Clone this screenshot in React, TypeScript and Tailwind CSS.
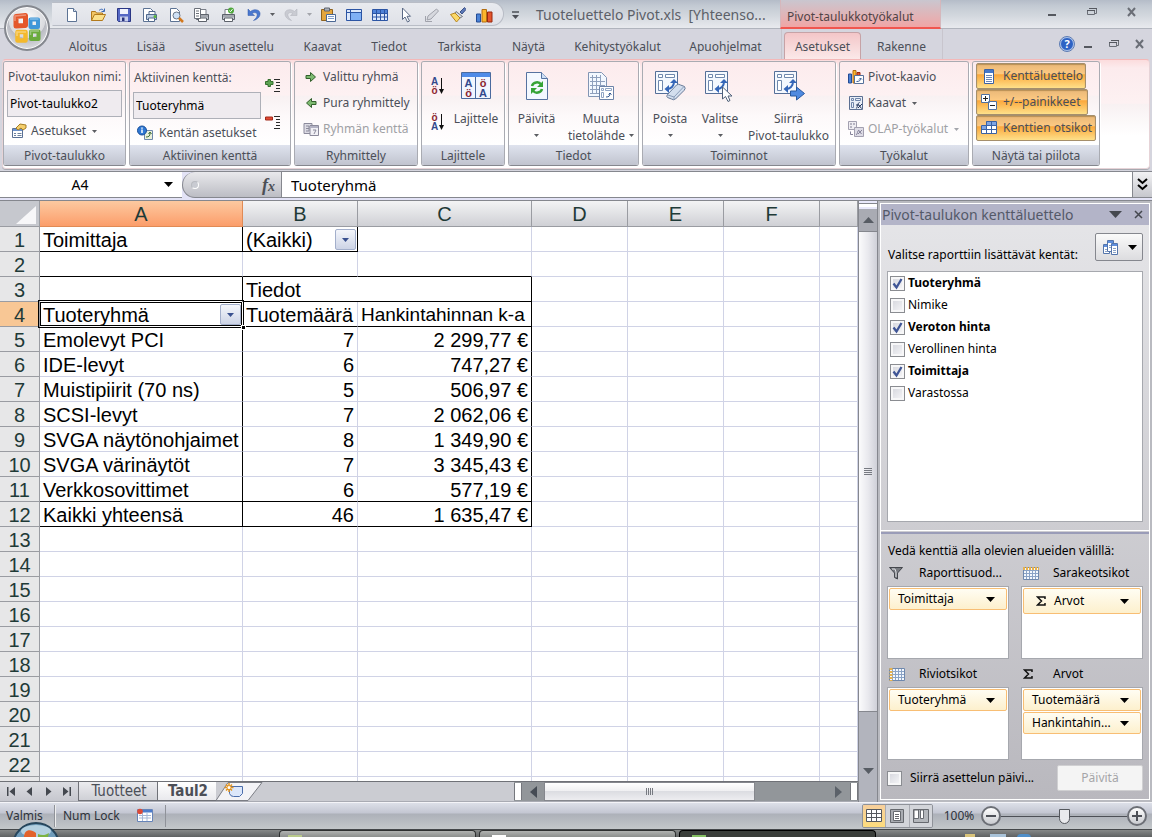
import React from 'react';

type Kids = { children?: React.ReactNode };

const Svg: React.FC<Kids & { w?: number; h?: number }> = ({ w = 16, h = 16, children }) => (
  <svg xmlns="http://www.w3.org/2000/svg" width={w} height={h} viewBox={`0 0 ${w} ${h}`} fill="none" className="shrink-0" aria-hidden="true">
    {children}
  </svg>
);

const Caret: React.FC<{ big?: boolean; faded?: boolean }> = ({ big, faded }) => (
  <Svg w={big ? 9 : 5} h={big ? 5 : 3}>
    <path d={big ? 'M0 0h9L4.500 5z' : 'M0 0h5L2.500 3z'} fill={big ? '#000' : faded ? '#a3a5ab' : '#5b5d62'} />
  </Svg>
);

/* ---------- small icons ---------- */

const sheet = <path d="M3.500 1.500h6l3 3v10h-9z" fill="#fff" stroke="#5c7394" />;
const fold = <path d="M9.500 1.500v3h3" stroke="#5c7394" fill="#dbe6f5" />;

const Printer: React.FC<Kids> = ({ children }) => (
  <Svg>
    <path d="M5 2.500h7v5H5z" fill="#fff" stroke="#7a7f88" />
    <path d="M2.500 7.500h12v5h-12z" fill="#c5c9d0" stroke="#5d626b" />
    <path d="M4.500 11h8v3.500h-8z" fill="#fff" stroke="#5d626b" />
    <path d="M3 9h11" stroke="#83878f" />
    {children}
  </Svg>
);

const TableIcon: React.FC<{ cols?: string }> = ({ cols }) => (
  <Svg>
    <path d="M.500 2.500h15v11H.500z" fill={cols ? '#dce8fb' : '#7fb0f5'} stroke="#2c55a4" />
    <path d={cols ? 'M1 3h14v3H1z' : 'M1 3h3v10H1zM4 3h11v2H4z'} fill={cols ? '#4f82d8' : '#dce8fb'} />
    <path d={cols ?? 'M4.500 3v10M1 5.500h14'} stroke="#2c55a4" />
  </Svg>
);

const QUICK: { name: string; icon: React.ReactNode }[] = [
  { name: 'Uusi', icon: <Svg>{sheet}{fold}</Svg> },
  {
    name: 'Avaa',
    icon: (
      <Svg>
        <path d="M1.500 13.500v-9h4l1 1.500h6v2" fill="#f2c665" stroke="#b27a1c" />
        <path d="m1.500 13.500 3-6h11l-3 6z" fill="#fbe08b" stroke="#b27a1c" />
        <path d="M9 3.500c2-2 4-1.500 5 .5m.5-2.500V4.500h-3" stroke="#3a69b5" />
      </Svg>
    ),
  },
  {
    name: 'Tallenna',
    icon: (
      <Svg>
        <path d="M1.500 1.500h13v13h-12l-1-1z" fill="#5568c4" stroke="#2a3684" />
        <path d="M4 2h8v5H4z" fill="#f1f4fd" />
        <path d="M4 9.500h8v5H4z" fill="#c9d0ec" />
        <path d="M6 10.500h2.500V14H6z" fill="#27327a" />
      </Svg>
    ),
  },
  {
    name: 'Pikatulostus',
    icon: (
      <Svg>
        <path d="M1.500 1.500h7l3 3v10h-10z" fill="#fff" stroke="#5c7394" />
        <path d="M4.500 7.500h10v5h-10z" fill="#b9cbe2" stroke="#51698c" />
        <path d="M7 4.500h6v3H7zM6.500 11h6v3.500h-6z" fill="#fff" stroke="#51698c" />
        <circle cx="13" cy="9.500" r="1.500" fill="#58b53a" />
      </Svg>
    ),
  },
  {
    name: 'Esikatselu',
    icon: (
      <Svg>
        <path d="M2.500 1.500h6l3 3v10h-9z" fill="#fff" stroke="#5c7394" />
        <circle cx="8.500" cy="8.500" r="3.500" fill="#cfe2f7" stroke="#6c7787" />
        <path d="m11 11 4 4" stroke="#d2781e" strokeWidth="2.500" />
      </Svg>
    ),
  },
  { name: 'Tulostusalue', icon: <Printer><path d="M.500 1.500h6v10h-6z" fill="#fff" stroke="#6b7079" /><path d="M2 4h3M2 6.500h3M2 9h3" stroke="#6b7079" /></Printer> },
  { name: 'Tulosta', icon: <Printer><circle cx="11" cy="3.500" r="3" fill="#4fa83c" /><path d="m9.500 3.500 1 1.200 2-2.500" stroke="#fff" /></Printer> },
];

const QUICK2: { name: string; icon: React.ReactNode }[] = [
  {
    name: 'Liitä',
    icon: (
      <Svg>
        <path d="M1.500 2.500h11v11h-11z" fill="#e5a63c" stroke="#8e6320" />
        <path d="M4.500 1h5v3h-5z" fill="#aab0ba" stroke="#5f656f" />
        <path d="M6.500 7.500h9v7h-9z" fill="#fff" stroke="#4a6794" />
        <path d="M8 9.500h6M8 11.500h6" stroke="#7d9cc9" />
      </Svg>
    ),
  },
  { name: 'Ruudut', icon: <TableIcon /> },
  { name: 'Taulukko', icon: <TableIcon cols="M4.500 3v10M8.500 3v10M12.500 3v10M1 6.500h14M1 10h14" /> },
  { name: 'Valitse objektit', icon: <Svg><path d="M4.500 1v11.500L7 10l2.500 5 2-1L9 9.300h3.500z" fill="#fff" stroke="#5c6b86" /></Svg> },
  { name: 'Piirrä', icon: <Svg><path d="m3 13 1-4 8.500-7 2 2L7 12z" fill="#d6d8de" stroke="#a0a2ab" /><path d="M1.500 9v5.500H8" stroke="#a0a2ab" /></Svg> },
  {
    name: 'Muotoilusivellin',
    icon: (
      <Svg>
        <path d="m14.500.500 1.500 2-4 4.500-2-2z" fill="#5c79b8" stroke="#3c5288" />
        <path d="m6 4.500 6.500 5-2.500 1.500L5 6z" fill="#d5d9e0" stroke="#74797f" />
        <path d="m5 6 5 5-3.500 4L.500 7.500z" fill="#fbd968" stroke="#b8861f" />
      </Svg>
    ),
  },
  {
    name: 'Kaavio',
    icon: (
      <Svg w={17}>
        <path d="M.500 7h4v8h-4z" fill="#4a82d6" stroke="#234b94" />
        <path d="M6 2.500h4.500V15H6z" fill="#fbb62c" stroke="#b26d10" />
        <path d="M11.500 5H16v10h-4.500z" fill="#e4552c" stroke="#99280e" />
      </Svg>
    ),
  },
];

const GridIcon: React.FC<{ left?: boolean }> = ({ left }) => (
  <Svg w={16} h={13}>
    <path d="M.500.500h15v12H.500z" fill="#f4f8fd" stroke="#6f88ad" />
    <path d="M3.500 1v11M6.500 1v11M9.500 1v11M12.500 1v11M1 3.500h14M1 6.500h14M1 9.500h14" stroke="#8ba3c6" />
    <path d={left ? 'M2 0v13' : 'M0 1.500h16'} stroke="#e8b24d" strokeWidth="3" strokeDasharray="2 1" />
  </Svg>
);

const Indent: React.FC<{ minus?: boolean }> = ({ minus }) => (
  <Svg w={16} h={15}>
    {minus ? (
      <path d="M.500 2h7v3h-7z" fill="#e34a35" stroke="#a02b1b" />
    ) : (
      <path d="M3 1.500h2.500v2H8v3H5.500v2H3v-2H.500v-3H3z" fill="#5da352" stroke="#35702f" />
    )}
    <path d="M9 1.500h6M11 4.500h4M11 7.500h4M11 10.500h4M9 13.500h6" stroke="#2a2a2a" />
  </Svg>
);

const SortIcon: React.FC<{ desc?: boolean }> = ({ desc }) => (
  <span className="flex w-4 items-center gap-px">
    <span className="flex flex-col text-center font-['Liberation_Sans'] text-[10px] leading-[9px] font-bold">
      <span className={desc ? 'text-[#8b2630]' : 'text-[#33498c]'}>{desc ? 'ö' : 'A'}</span>
      <span className={desc ? 'text-[#33498c]' : 'text-[#8b2630]'}>{desc ? 'A' : 'ö'}</span>
    </span>
    <Svg w={5} h={16}><path d="M2.500 0v13" stroke="#111" /><path d="M0 11h5l-2.500 5z" fill="#111" /></Svg>
  </span>
);

const Arrow: React.FC<{ back?: boolean }> = ({ back }) => (
  <Svg w={12} h={12}>
    <path d={back ? 'M11 4.500v3H6.500v3L1.500 6l5-4.500v3z' : 'M1 4.500v3h4.500v3l5-4.500-5-4.500v3z'} fill="#7dba70" stroke="#33602c" />
  </Svg>
);

/* pivot layout drawing shared by the big buttons of Toiminnot */
const PivotBig: React.FC<Kids> = ({ children }) => (
  <Svg w={32} h={32}>
    <path d="M1.500 1.500h22v22h-22z" fill="#f4f8fe" stroke="#546f98" />
    <path d="M4.500 4.500h4v3h-4zM11.500 4.500h9v3h-9zM4.500 10.500h4v10h-4z" fill="#fff" stroke="#6f88ad" />
    <path d="M13 19c4 0 7-3 7-7" stroke="#3566b8" strokeWidth="2" />
    <path d="m16 13 4-4 4 4zM15 15v8l-4.500-4z" fill="#3566b8" />
    {children}
  </Svg>
);

/* ---------- ribbon pieces ---------- */

const Group: React.FC<Kids & { title: string; width: string }> = ({ title, width, children }) => (
  <section className={`flex h-[105px] shrink-0 flex-col overflow-hidden rounded-[3px] border border-[#a9abb2] border-b-[#85878e] shadow-[1px_1px_0_#ffffff] ${width}`}>
    <div className="flex min-h-0 flex-1 bg-[linear-gradient(#fcebed_0,#fdf1f2_40%,#f8f1f2_41%,#fdf9fa_65%,#ffffff)]">{children}</div>
    <h2 className="h-5 shrink-0 bg-linear-to-b from-[#dfe3ee] to-[#c1c4cf] text-center leading-[22px]">{title}</h2>
  </section>
);

const RowButton: React.FC<{ icon: React.ReactNode; label: string; caret?: boolean; disabled?: boolean }> = ({ icon, label, caret, disabled }) => (
  <button disabled={disabled} className={`flex h-[26px] items-center gap-1 whitespace-nowrap ${disabled ? 'text-[#a0a1a5]' : ''}`}>
    <span className="flex w-4 justify-center">{icon}</span>
    {label}
    {caret && <span className="pl-0.5"><Caret faded={disabled} /></span>}
  </button>
);

const BigButton: React.FC<{ icon: React.ReactNode; lines: string[]; caret?: 'below' | 'beside'; width: string }> = ({ icon, lines, caret, width }) => (
  <button className={`flex flex-col items-center pt-2 leading-[17px] whitespace-nowrap ${width}`}>
    <span className="mb-2 flex h-8 items-center">{icon}</span>
    <span>{lines[0]}</span>
    {lines[1] && <span className="flex items-center gap-1">{lines[1]}{caret === 'beside' && <Caret />}</span>}
    {caret === 'below' && <span className="flex h-[17px] items-center"><Caret /></span>}
  </button>
);

const ToggleButton: React.FC<{ icon: React.ReactNode; label: string; width: string }> = ({ icon, label, width }) => (
  <button aria-pressed="true" className={`flex h-[26px] items-center gap-1.5 rounded-xs border border-[#a58f6c] bg-[linear-gradient(#eab878_0,#fcc982_40%,#fba83c_45%,#fee08a)] pl-1 whitespace-nowrap shadow-[inset_0_1px_1px_#b98f55] ${width}`}>
    <span className="flex w-4 shrink-0 justify-center">{icon}</span>
    {label}
  </button>
);

/* window buttons of the frame and of the workbook */
const WindowButtons: React.FC<{ gap: string }> = ({ gap }) => (
  <div className={`flex items-center ${gap}`}>
    <button aria-label="Pienennä"><Svg w={12} h={10}><path d="M2 8h8" stroke="#55585f" strokeWidth="2" /></Svg></button>
    <button aria-label="Palauta"><Svg w={12} h={10}><path d="M3.500 2V1.500h7v5H9" stroke="#6a6e76" /><path d="M1.500 3.500h7v4h-7z" stroke="#6a6e76" /><path d="M1 3.500h8M3 1.500h8" stroke="#55585f" /></Svg></button>
    <button aria-label="Sulje"><Svg w={12} h={10}><path d="m2 1 7 8M9 1 2 9" stroke="#6a6e76" strokeWidth="2" /></Svg></button>
  </div>
);

const TABS: [string, string][] = [
  ['Aloitus', 'w-[68px]'],
  ['Lisää', 'w-[58px]'],
  ['Sivun asettelu', 'w-[109px]'],
  ['Kaavat', 'w-[67px]'],
  ['Tiedot', 'w-[66px]'],
  ['Tarkista', 'w-[75px]'],
  ['Näytä', 'w-[63px]'],
  ['Kehitystyökalut', 'w-[115px]'],
  ['Apuohjelmat', 'w-[101px]'],
];

const TitleBar = () => (
  <header className="relative shrink-0 bg-[#d5d5de]">
    <div className="flex h-[29px] border-b border-[#b0b4bd] bg-[linear-gradient(#b4bcc8_0,#c3cad3_6px,#d3d8de_16px,#e8eaee)]">
      <div className="mt-0.5 mb-0.5 ml-[52px] flex items-center rounded-r-full border border-[#b9bdc6] border-l-transparent bg-linear-to-b from-[#e9ebef] to-[#dfe1e8] pt-px pr-2.5 pl-[11px]">
        <div className="flex gap-2.5">
          {QUICK.map((q) => <button key={q.name} aria-label={q.name}>{q.icon}</button>)}
        </div>
        <button aria-label="Kumoa" className="ml-2.5 flex items-center gap-2">
          <Svg><path d="M2 2v6.500h6.500L6 6.500c3-2 6-.5 5 2.500-.5 2-2 3-3.500 4.500 4-1 7-4 6.500-7.500C13.500 2.500 8 1.500 4.500 4.500z" fill="#4a78cf" stroke="#2e56a6" strokeWidth=".5" /></Svg>
          <Caret />
        </button>
        <button aria-label="Tee uudelleen" className="ml-2 flex items-center gap-2">
          <Svg><path d="M14 2v6.500H7.500L10 6.500c-3-2-6-.5-5 2.500.5 2 2 3 3.500 4.500-4-1-7-4-6.500-7.500C2.500 2.500 8 1.500 11.500 4.500z" fill="#c9cbd2" stroke="#aeb0b8" strokeWidth=".5" /></Svg>
          <Caret faded />
        </button>
        <div className="ml-2 flex gap-2.5">
          {QUICK2.map((q) => <button key={q.name} aria-label={q.name}>{q.icon}</button>)}
        </div>
      </div>
      <button aria-label="Mukauta" className="mx-2 pt-0.5">
        <Svg w={7} h={8}><path d="M0 1h7" stroke="#4d5057" strokeWidth="1.500" /><path d="M0 4h7L3.500 8z" fill="#4d5057" /></Svg>
      </button>
      <h1 className="ml-[9px] w-[234px] self-center pt-0.5 text-sm whitespace-pre text-[#5c6068]">Tuoteluettelo Pivot.xls  [Yhteenso...</h1>
      <div className="ml-auto flex">
        <div className="mr-[105px] h-[29px] w-[161px] border-x border-b-2 border-x-[#d5b7bc] border-b-[#f0564f] bg-linear-to-b from-[#c9c6cf] to-[#f0a5a5] pl-1.5 text-xs leading-[33px] text-[#4f4447]">Pivot-taulukkotyökalut</div>
        <div className="mr-3.5 flex h-6 items-center"><WindowButtons gap="gap-7" /></div>
      </div>
    </div>

    <nav className="flex h-[30px] items-end pl-[54px] leading-[25px]">
      {TABS.map(([name, width]) => <a key={name} href="#" className={`text-center whitespace-nowrap ${width}`}>{name}</a>)}
      <div className="ml-[5px] flex h-[30px] items-end border-x border-[#c8c5cd] pl-0.5">
        <a href="#" aria-current="page" className="h-[27px] w-[77px] rounded-t-sm border border-b-0 border-[#c6a2a6] bg-linear-to-b from-[#f3c6c8] to-[#fbe9e9] pt-px text-center">Asetukset</a>
        <a href="#" className="w-[81px] text-center">Rakenne</a>
      </div>
      <div className="mr-1.5 ml-auto flex h-[30px] items-center gap-2">
        <button aria-label="Ohje" className="h-3.5 w-3.5 rounded-full border border-[#a9c3ee] bg-[#2d62c4] text-[11px] leading-3 font-bold text-white outline outline-[#5b7bb4]">?</button>
        <WindowButtons gap="gap-3.5" />
      </div>
    </nav>

    <button aria-label="Office" className="absolute top-[5px] left-1 flex h-[46px] w-[46px] items-center justify-center rounded-full border-2 border-[#85888f] bg-[radial-gradient(circle_at_50%_30%,#ffffff_0,#d9dade_50%,#b9bbc2_52%,#f2f2f4)] shadow-[inset_0_0_0_1px_#ffffff]">
      <Svg w={28} h={30}>
        <path d="M3 3.500 12.500 2.500v10L3 13z" stroke="#e4572b" strokeWidth="5" strokeLinejoin="round" />
        <path d="M17.500 6.500h7.500v7.500h-7.500z" stroke="#3f97d8" strokeWidth="4" strokeLinejoin="round" />
        <path d="M4.500 19h8v8.500h-8z" stroke="#f4b92c" strokeWidth="4.500" strokeLinejoin="round" />
        <path d="M18 18.500h7.500v7.500h-7.500z" stroke="#6bab3e" strokeWidth="4" strokeLinejoin="round" />
        <path d="M2 8V3l11-1M17 6h8.500M4 23v-4h9M17.500 22v-4H26" stroke="#fff" strokeOpacity=".35" strokeWidth="1.500" />
      </Svg>
    </button>
  </header>
);

const Ribbon = () => (
  <div className="shrink-0 bg-[#d5d5de] px-0.5 pb-0.5">
    <div className="flex h-[110px] gap-[3px] rounded-sm border border-[#e6d3d7] border-t-[#f4b8b8] bg-[linear-gradient(#fbdcdd_0,#fcebed_8px,#fdf1f2_40%,#f8f1f2_41%,#ffffff_70%)] pt-px shadow-[0_1px_0_#a6a8af]">
      <Group title="Pivot-taulukko" width="w-[123px]">
        <div className="flex flex-1 flex-col px-[3px] pt-1.5">
          <label htmlFor="pivot-name" className="pl-px leading-[18px] whitespace-nowrap">Pivot-taulukon nimi:</label>
          <input id="pivot-name" defaultValue="Pivot-taulukko2" className="mt-1 h-[27px] w-full border border-[#aeb0b8] bg-[#efebef] px-0.5 text-black" />
          <button className="mt-1 ml-1 flex h-5 items-center gap-1">
            <Svg>
              <path d="M1.500 5.500h10v9h-10z" fill="#fff" stroke="#5a7095" />
              <path d="M2 6h9v2H2z" fill="#6c92cc" />
              <path d="M3 10.500h2M3 12.500h2M6.500 10.500h4M6.500 12.500h4" stroke="#6c7f9d" />
              <path d="m5 5 4-4 6 1v3l-3 2-2-2-3 2z" fill="#f5ce6c" stroke="#a67d24" />
            </Svg>
            Asetukset <span className="pl-0.5"><Caret /></span>
          </button>
        </div>
      </Group>

      <Group title="Aktiivinen kenttä" width="w-[162px]">
        <div className="flex w-[131px] flex-col pt-1.5 pl-[3px]">
          <label htmlFor="active-field" className="pl-px leading-5 whitespace-nowrap">Aktiivinen kenttä:</label>
          <input id="active-field" defaultValue="Tuoteryhmä" className="mt-1 h-[27px] w-full border border-[#aeb0b8] bg-[#efebef] px-0.5 text-black" />
          <button className="mt-1 ml-1 flex h-5 items-center gap-1.5 whitespace-nowrap">
            <Svg>
              <path d="M7.500 5.500h8v9h-8z" fill="#e9f0da" stroke="#6e87ab" />
              <path d="M9 12c3 0 4-1 4-4m-1.500 1L13 7l1.500 2" stroke="#3c6a34" />
              <circle cx="5" cy="5.500" r="4.500" fill="#2f78d4" stroke="#174c96" />
              <path d="M5 4.500V8M5 2.500v1.200" stroke="#fff" strokeWidth="1.500" />
            </Svg>
            Kentän asetukset
          </button>
        </div>
        <div className="ml-1 flex flex-col gap-[22px] pt-4">
          <button aria-label="Laajenna kenttä"><Indent /></button>
          <button aria-label="Tiivistä kenttä"><Indent minus /></button>
        </div>
      </Group>

      <Group title="Ryhmittely" width="w-[124px]">
        <div className="flex flex-col pt-0.5 pl-2">
          <RowButton icon={<Arrow />} label="Valittu ryhmä" />
          <RowButton icon={<Arrow back />} label="Pura ryhmittely" />
          <RowButton
            disabled
            label="Ryhmän kenttä"
            icon={
              <Svg>
                <path d="M1 2.500h8v10H1z" fill="#dcdbe4" stroke="#8b8a9b" />
                <path d="M7 4.500h8.500v10H7z" fill="#f1f0f5" stroke="#8b8a9b" />
                <path d="M7 5h8v2H7z" fill="#b3b2c4" />
                <path d="M3 5h3v5H3m0-2.500h3M10 9h3l-2 4" stroke="#8b8a9b" />
              </Svg>
            }
          />
        </div>
      </Group>

      <Group title="Lajittele" width="w-[84px]">
        <div className="flex w-[30px] flex-col items-center gap-[18px] pt-[15px] pl-1">
          <button aria-label="Lajittele A-Ö"><SortIcon /></button>
          <button aria-label="Lajittele Ö-A"><SortIcon desc /></button>
        </div>
        <BigButton
          width="w-12"
          lines={['Lajittele']}
          icon={
            <Svg w={30} h={28}>
              <path d="M.500.500h29v26H.500z" fill="#f1f6ff" stroke="#4a6a9e" />
              <path d="M1 1h28v4H1z" fill="#4f8be8" />
              <path d="M14.500 5v21" stroke="#4a6a9e" />
              <g fontFamily="Liberation Sans" fontSize="11" fontWeight="700" textAnchor="middle">
                <text x="7.500" y="15" fill="#33498c">A</text>
                <text x="7.500" y="25" fill="#8b2630">ö</text>
                <text x="22" y="15" fill="#8b2630">ö</text>
                <text x="22" y="25" fill="#33498c">A</text>
              </g>
            </Svg>
          }
        />
      </Group>

      <Group title="Tiedot" width="w-[131px]">
        <BigButton
          width="w-[55px]"
          lines={['Päivitä']}
          caret="below"
          icon={
            <Svg w={24} h={30}>
              <path d="M1.500 1.500h15l6 6v21h-21z" fill="#f3f8ff" stroke="#5672a0" />
              <path d="M16.500 1.500v6h6" fill="#cfdff5" stroke="#5672a0" />
              <path d="M7 15c1-4 7-5 9-1.500M17 18c-1 4-7 5-9 1.500" stroke="#36a336" strokeWidth="2.500" />
              <path d="M18 10v6h-6zM6 23v-6h6z" fill="#36a336" />
            </Svg>
          }
        />
        <BigButton
          width="w-[74px]"
          lines={['Muuta', 'tietolähde']}
          caret="beside"
          icon={
            <Svg w={28} h={30}>
              <path d="M1.500 1.500h13l5 5v19h-18z" fill="#f3f8ff" stroke="#8295b3" />
              <path d="M5.500 4v19M9.500 4v19M13.500 4v19M3 6.500h11M3 10.500h15M3 14.500h15M3 18.500h15M3 22.500h15" stroke="#8fa0bd" />
              <path d="M12.500 15.500h14v13h-14z" fill="#fff" stroke="#6c83a8" />
              <path d="M14.500 17.500h2v2h-2zM18.500 17.500h6v2h-6zM14.500 21.500h2v5h-2z" stroke="#8fa4c4" />
              <path d="M19 26c3 0 4-1 4-3.500M21.500 23.500 23 22l1.500 1.500" stroke="#33578f" />
            </Svg>
          }
        />
      </Group>

      <Group title="Toiminnot" width="w-[194px]">
        <BigButton width="w-[54px]" lines={['Poista']} caret="below" icon={<PivotBig><path d="m13.500 24.500 9-9.500q2-1.500 4 0l4 1.500q1.500 2-.5 4l-8.500 8.500q-2 1.500-4 0l-4-1.500q-1.500-1 0-3z" fill="#d3deee" stroke="#667996" /><path d="m14 25 6 2 9.500-10M20 27v3" stroke="#8b9db9" /></PivotBig>} />
        <BigButton width="w-[46px]" lines={['Valitse']} caret="below" icon={<PivotBig><path d="M18.500 17v12l3-2.500 2.500 5 2-1-2-4.500h4z" fill="#fff" stroke="#4f6079" /></PivotBig>} />
        <BigButton width="w-[91px]" lines={['Siirrä', 'Pivot-taulukko']} icon={<PivotBig><path d="M17.500 21h6v-4l8 6.500-8 6.500v-4h-6z" fill="#4f8ae0" stroke="#27589f" /></PivotBig>} />
      </Group>

      <Group title="Työkalut" width="w-[130px]">
        <div className="flex flex-col pt-0.5 pl-2">
          <RowButton
            label="Pivot-kaavio"
            icon={
              <Svg>
                <path d="M.500 5h3v9h-3z" fill="#4a82d6" stroke="#234b94" />
                <path d="M5 1.500h3V14H5z" fill="#fbb62c" stroke="#b26d10" />
                <path d="M9 3.500h3V8H9z" fill="#e4552c" stroke="#99280e" />
                <path d="M6.500 6.500h9v8h-9z" fill="#fff" stroke="#55709b" />
                <path d="M8.500 12.500c3 0 4-1 4-3m-1.500 1 1.500-1.500 1.500 1.500" stroke="#33578f" />
              </Svg>
            }
          />
          <RowButton
            label="Kaavat"
            caret
            icon={
              <Svg>
                <path d="M1.500 1.500h13v13h-13z" fill="#e9eef7" stroke="#5b6f92" />
                <path d="M3.500 3.500h2v2h-2zM7.500 3.500h5v2h-5zM3.500 7.500h2v5h-2z" stroke="#6e84a8" />
                <path d="M8 13.500c1.500 0 1.500-6 3.500-6M8 10h3M10 13l4-4M10.500 9.500l3 4" stroke="#24365c" />
              </Svg>
            }
          />
          <RowButton
            label="OLAP-työkalut"
            caret
            disabled
            icon={
              <Svg>
                <path d="M.500.500h8v8h-8z" fill="#efedf2" stroke="#a3a0b0" />
                <path d="M2.500 2.500h1v1h-1zM5.500 2.500h1v1h-1zM2.500 5.500h1v1h-1z" stroke="#a3a0b0" />
                <path d="M6.500 6.500h9v9h-9z" fill="#dedce6" stroke="#a3a0b0" />
                <path d="M8 14c1.500 0 1.500-5 3-5m-1 4 4-4m-3.500 0 3 4M2.500 10.500v3H5" stroke="#87849a" />
              </Svg>
            }
          />
        </div>
      </Group>

      <Group title="Näytä tai piilota" width="w-[128px]">
        <div className="flex flex-col pt-px pl-[3px]">
          <ToggleButton
            label="Kenttäluettelo"
            width="w-[110px]"
            icon={<Svg w={10} h={15}><path d="M.500.500h9v14h-9z" fill="#fff" stroke="#3a62a4" /><path d="M1 1h8v3H1z" fill="#4577c9" /><path d="M2 6.500h6M2 8.500h6M2 10.500h6M2 12.500h6" stroke="#6c86b4" /></Svg>}
          />
          <ToggleButton
            label="+/--painikkeet"
            width="w-[112px]"
            icon={<Svg><path d="M.500.500h8v8h-8zM7.500 7.500h8v8h-8z" fill="#fff" stroke="#51719f" /><path d="M2 4.500h5M4.500 2v5M9 11.500h5" stroke="#222" /></Svg>}
          />
          <ToggleButton
            label="Kenttien otsikot"
            width="w-[120px]"
            icon={<Svg><path d="M5.500 1.500h10v12H.500v-8h5z" fill="#fff" stroke="#3a62a4" /><path d="M6 2h9v3H6zM1 6h4v3H1z" fill="#7fa5e4" /><path d="M.500 9.500h15M5.500 1.500v12M10.500 1.500v12M5.500 5.500h10" stroke="#3a62a4" /></Svg>}
          />
        </div>
      </Group>
    </div>
  </div>
);

const FormulaBar = () => (
  <div className="flex h-[29px] shrink-0 border-t border-[#85878e] bg-[#e3e3f6] pb-0.5 text-[15px] text-black">
    <div className="flex h-[26px] w-[182px] items-center border-b border-[#85878e] bg-white">
      <input aria-label="Nimiruutu" defaultValue="A4" className="w-40 min-w-0 text-center text-sm" />
      <button aria-label="Avaa nimet" className="ml-1"><Caret big /></button>
    </div>
    <div className="flex h-[26px] w-[100px] items-center justify-between rounded-l-full border-r border-b border-l border-[#85878e] bg-linear-to-b from-[#e9e9ec] to-[#bcbdc4] pr-1.5 pl-2">
      <span className="h-2 w-2 rounded-full border border-[#b9bbc1] border-r-white border-b-white bg-[#c9cbd2]" />
      <button aria-label="Lisää funktio" className="font-['Liberation_Serif'] text-lg leading-6 font-bold text-[#4c4f56] italic">f<span className="text-sm">x</span></button>
    </div>
    <input aria-label="Kaavarivi" defaultValue="Tuoteryhmä" className="h-[26px] min-w-0 flex-1 border-b border-[#85878e] bg-white pl-[9px]" />
    <button aria-label="Laajenna kaavarivi" className="flex h-[26px] w-5 items-center justify-center border-b border-l border-[#85878e] bg-linear-to-b from-[#f2f2f4] to-[#c6c7cd]">
      <Svg w={11} h={13}><path d="m1 1 4.500 4L10 1M1 7l4.500 4L10 7" stroke="#000" strokeWidth="2" /></Svg>
    </button>
  </div>
);

/* ---------- worksheet ---------- */

const COLS: [string, string][] = [
  ['A', 'w-[203px]'],
  ['B', 'w-[115px]'],
  ['C', 'w-[174px]'],
  ['D', 'w-24'],
  ['E', 'w-24'],
  ['F', 'w-24'],
  ['', ''],
];

const DATA: [string, string, string][] = [
  ['Emolevyt PCI', '7', '2 299,77 €'],
  ['IDE-levyt', '6', '747,27 €'],
  ['Muistipiirit (70 ns)', '5', '506,97 €'],
  ['SCSI-levyt', '7', '2 062,06 €'],
  ['SVGA näytönohjaimet', '8', '1 349,90 €'],
  ['SVGA värinäytöt', '7', '3 345,43 €'],
  ['Verkkosovittimet', '6', '577,19 €'],
  ['Kaikki yhteensä', '46', '1 635,47 €'],
];

const R = 'border-r-black';
const B = 'border-b-black';
const RB = 'border-r-black border-b-black';

const Cell: React.FC<Kids & { line?: string; right?: boolean; span?: number }> = ({ line = '', right, span, children }) => (
  <td colSpan={span} className={`relative h-[25px] border-r border-b border-[#d0d3e6] p-0 px-[3px] pt-0.5 align-top leading-[22px] whitespace-nowrap ${right ? 'text-right' : ''} ${line}`}>{children}</td>
);

const Blank: React.FC<{ n: number }> = ({ n }) => <>{Array.from({ length: n }, (_, i) => <Cell key={i} />)}</>;

const Filter: React.FC<{ label: string }> = ({ label }) => (
  <button aria-label={label} className="absolute top-0.5 right-px flex h-[21px] w-[21px] items-center justify-center rounded-xs border border-[#a3afcb] bg-linear-to-b from-[#f4f6fb] to-[#cdd4e6]">
    <Svg w={7} h={4}><path d="M0 0h7L3.500 4z" fill="#39508f" /></Svg>
  </button>
);

const rowCells = (n: number) => {
  if (n === 1)
    return (
      <>
        <Cell line={RB}>Toimittaja</Cell>
        <Cell line={RB}>(Kaikki)<Filter label="Suodata toimittaja" /></Cell>
        <Blank n={5} />
      </>
    );
  if (n === 2) return <><Cell line={B} /><Cell line={B} /><Cell line={B} /><Blank n={4} /></>;
  if (n === 3) return <><Cell line="border-r-black border-b-white" /><Cell line={RB} span={2}>Tiedot</Cell><Blank n={4} /></>;
  if (n === 4)
    return (
      <>
        <Cell line="border-r-white border-b-white">
          Tuoteryhmä
          <Filter label="Suodata tuoteryhmä" />
          <span className="absolute -inset-0.5 border-3 border-double border-black" />
          <span className="absolute -right-1 -bottom-1 z-10 h-[5px] w-[5px] border border-white bg-black" />
        </Cell>
        <Cell line={B}>Tuotemäärä</Cell>
        <Cell line="border-r-black border-b-black text-[19px]">Hankintahinnan k-a</Cell>
        <Blank n={4} />
      </>
    );
  const d = DATA[n - 5];
  if (!d) return <Blank n={7} />;
  const last = n === 11 || n === 12;
  return (
    <>
      <Cell line={last ? RB : R}>{d[0]}</Cell>
      <Cell line={last ? B : ''} right>{d[1]}</Cell>
      <Cell line={last ? RB : R} right>{d[2]}</Cell>
      <Blank n={4} />
    </>
  );
};

const Sheet = () => (
  <div className="min-h-0 flex-1 overflow-hidden border-t border-[#85878e] bg-white">
    <table className="w-full table-fixed border-separate border-spacing-0 font-['Liberation_Sans'] text-xl text-black">
      <thead>
        <tr>
          <th className="h-[26px] w-10 border-r border-b border-[#9a9ca2] bg-[#c6c8ce] p-0">
            <Svg w={38} h={24}><path d="M36 4v18H16z" fill="#f7f7f9" /></Svg>
          </th>
          {COLS.map(([c, w], i) => (
            <th
              key={i}
              className={`h-[26px] border-r border-b p-0 leading-6 font-normal text-[#1f3a37] ${w} ${c === 'A' ? 'border-[#e08a55] bg-linear-to-b from-[#fcc9a0] to-[#fb9d6a]' : 'border-[#9a9ca2] bg-linear-to-b from-[#f4f4f5] to-[#cfd0d5]'}`}
            >
              {c}
            </th>
          ))}
        </tr>
      </thead>
      <tbody>
        {Array.from({ length: 23 }, (_, i) => i + 1).map((n) => (
          <tr key={n}>
            <th className={`h-[25px] border-r border-b border-[#9a9ca2] p-0 pt-0.5 align-top leading-[22px] font-normal text-[#1f3a37] ${n === 4 ? 'bg-[#f8c795]' : 'bg-[#e7e7e8]'}`}>{n < 23 ? n : ''}</th>
            {rowCells(n)}
          </tr>
        ))}
      </tbody>
    </table>
  </div>
);

const NavButton: React.FC<{ label: string; d: string }> = ({ label, d }) => (
  <button aria-label={label}><Svg w={9} h={9}><path d={d} fill="#44484f" /></Svg></button>
);

const SheetTabs = () => (
  <div className="flex h-[21px] shrink-0 border-t border-b border-t-[#6f7177] border-b-[#a9abb3] bg-[#cbccd2] font-['DejaVu_Sans_Condensed'] text-[15px]">
    <div className="flex w-[78px] items-center justify-around bg-linear-to-b from-[#dcdde2] to-[#c6c7ce] px-0.5">
      <NavButton label="Ensimmäinen" d="M0 0h1.500v9H0zM8 0v9L2.500 4.500z" />
      <NavButton label="Edellinen" d="M7 0v9L1.500 4.500z" />
      <NavButton label="Seuraava" d="M2 0v9l5.500-4.500z" />
      <NavButton label="Viimeinen" d="M7.500 0H9v9H7.500zM1 0v9l5.500-4.500z" />
    </div>
    <button className="w-20 border-x border-b border-[#6f7177] bg-linear-to-b from-[#ececef] to-[#cfd0d6] pl-0.5 leading-[18px]">Tuotteet</button>
    <button className="w-[58px] border-b border-[#6f7177] bg-linear-to-b from-white to-[#e9e9ed] pl-0.5 leading-[18px] font-bold text-[#4c4f57]">Taul2</button>
    <button aria-label="Uusi taulukko">
      <Svg w={48} h={19}>
        <path d="M0 18.500 12 .500h34L32 18.500z" fill="#f3f3f6" stroke="#7b7d84" />
        <path d="M13.500 4.500h13v7l-3 3h-6q-3 0-4-3z" fill="#dce7fa" stroke="#4b6dab" />
        <path d="M13 1v9M8.500 5.500h9M10 2.500l6 6M16 2.500l-6 6" stroke="#e5951f" strokeWidth="1.500" />
        <circle cx="13" cy="5.500" r="1.500" fill="#fff" />
      </Svg>
    </button>
    <div className="ml-auto flex w-[344px] bg-[#92969a]">
      <span className="my-px w-2 border-x border-[#75777d] bg-white" />
      <button aria-label="Vieritä vasemmalle" className="flex w-[22px] items-center justify-center"><Svg w={7} h={12}><path d="M7 0v12L0 6z" fill="#454b54" /></Svg></button>
      <div className="flex w-[211px] items-center justify-center gap-px border border-[#85878d] bg-[linear-gradient(#ffffff_0,#f0f0f2_45%,#dcdde2_50%,#ededf0)]">
        {[0, 1, 2, 3].map((i) => <span key={i} className="h-[7px] w-px bg-[#777a81]" />)}
      </div>
      <button aria-label="Vieritä oikealle" className="mr-2 ml-auto"><Svg w={7} h={12}><path d="M0 0v12l7-6z" fill="#5b6169" /></Svg></button>
      <span className="my-px w-2 border-x border-[#75777d] bg-white" />
    </div>
  </div>
);

const VScroll = () => (
  <div className="flex w-5 shrink-0 flex-col border-x border-t border-[#85878e] bg-[#b2b4bd]">
    <span className="h-2 shrink-0 border-y-2 border-[#e9e9fb] bg-white shadow-[inset_0_1px_0_#85878e]" />
    <button aria-label="Vieritä ylös" className="flex h-[23px] shrink-0 items-center justify-center border-b border-[#85878e] bg-[#a9abb3]"><Svg w={11} h={6}><path d="M0 6h11L5.500 0z" fill="#575c64" /></Svg></button>
    <div className="flex flex-[480] flex-col items-center justify-center gap-px border-b border-[#85878e] bg-linear-to-r from-[#fbfbfc] via-[#e9e9ee] to-[#cfd0d8]">
      {[0, 1, 2, 3].map((i) => <span key={i} className="h-px w-2 bg-[#777a81]" />)}
    </div>
    <div className="flex flex-[90] items-end justify-center">
      <button aria-label="Vieritä alas" className="mb-7"><Svg w={11} h={6}><path d="M0 0h11L5.500 6z" fill="#575c64" /></Svg></button>
    </div>
  </div>
);

/* ---------- field list ---------- */

const CheckBox: React.FC<{ id: string; checked?: boolean }> = ({ id, checked }) => (
  <span className="relative h-[15px] w-[15px] shrink-0">
    <input id={id} type="checkbox" defaultChecked={checked} className="peer block h-[15px] w-[15px] appearance-none border border-[#8a8c91] bg-linear-to-br from-[#d3d4db] to-[#f8f8fa] shadow-[inset_0_0_0_2px_#f7f7f8]" />
    <svg viewBox="0 0 15 15" fill="none" className="pointer-events-none absolute inset-0 hidden peer-checked:block">
      <path d="m3.500 7.500 3 4L11.500 3" stroke="#3f5596" strokeWidth="2.300" />
    </svg>
  </span>
);

const FIELDS: [string, boolean][] = [
  ['Tuoteryhmä', true],
  ['Nimike', false],
  ['Veroton hinta', true],
  ['Verollinen hinta', false],
  ['Toimittaja', true],
  ['Varastossa', false],
];

const Sigma = () => <Svg w={10} h={10}><path d="M9 3V1H1.500L5.500 5l-4 4H9V7" stroke="#111" strokeWidth="1.500" /></Svg>;

const Chip: React.FC<{ label: string; sigma?: boolean }> = ({ label, sigma }) => (
  <button className={`flex w-full shrink-0 items-center rounded-xs border border-[#f8be74] bg-linear-to-b from-[#fffdf3] to-[#fdf0cd] pr-[11px] pl-2 whitespace-nowrap ${sigma ? 'h-[26px]' : 'h-[22px]'}`}>
    {sigma && <span className="mr-2 ml-1"><Sigma /></span>}
    {label}
    <span className="ml-auto"><Caret big /></span>
  </button>
);

const Area: React.FC<Kids & { icon: React.ReactNode; label: string }> = ({ icon, label, children }) => (
  <div className="flex-1">
    <h3 className="flex h-[26px] items-center whitespace-nowrap"><span className="flex w-8 shrink-0 pl-0.5">{icon}</span>{label}</h3>
    <div className="flex h-[73px] flex-col gap-px border border-[#a6a8ae] bg-white p-px">{children}</div>
  </div>
);

const FieldList = () => (
  <aside className="flex w-[274px] shrink-0 flex-col border-t border-[#85878e] bg-[#b9bac0] pt-0.5 pr-0.5 pb-0.5 pl-0.5 text-black">
    <div className="flex min-h-0 flex-1 flex-col border border-white bg-linear-to-b from-[#e6e6e9] to-[#b9b8be]">
      <div className="flex h-[21px] shrink-0 items-center bg-[#b3b4c8] pr-1.5 pl-px text-[#545968]">
        <h2 className="flex-1 text-sm">Pivot-taulukon kenttäluettelo</h2>
        <button aria-label="Ruudun asetukset"><Svg w={13} h={7}><path d="M0 0h13L6.500 7z" fill="#45484f" /></Svg></button>
        <button aria-label="Sulje ruutu" className="ml-3"><Svg w={9} h={9}><path d="m1 1 7 7M8 1 1 8" stroke="#45484f" strokeWidth="1.500" /></Svg></button>
      </div>

      <div className="flex min-h-0 flex-1 flex-col px-1.5 pt-2">
        <div className="flex h-[38px] shrink-0 items-start">
          <h3 className="flex-1 pt-3.5 pl-px leading-4 whitespace-nowrap">Valitse raporttiin lisättävät kentät:</h3>
          <button aria-label="Asettelu" className="flex h-7 w-12 items-center justify-center gap-2.5 rounded-xs border border-[#85878e] bg-linear-to-b from-[#fafafa] to-[#dcdcdf]">
            <Svg>
              <path d="M1.500 5.500h6v9h-6z" fill="#fff" stroke="#5475ab" />
              <path d="M2 6h5v2H2z" fill="#5f8fdd" />
              <path d="M5.500 1.500h6v11h-6z" fill="#fff" stroke="#5475ab" />
              <path d="M6 2h5v2H6z" fill="#5f8fdd" />
              <path d="M9.500 4.500h6v11h-6z" fill="#fff" stroke="#5475ab" />
              <path d="M10 5h5v2h-5z" fill="#5f8fdd" />
              <path d="M11 9.500h3M11 11.500h3M11 13.500h3M3 10.500h2M3 12.500h2M7 6.500h2M7 8.500h2" stroke="#8ba3c6" />
            </Svg>
            <Caret big />
          </button>
        </div>
        <ul className="min-h-0 flex-1 border border-[#a6a8ae] bg-white pl-0.5">
          {FIELDS.map(([name, on]) => (
            <li key={name} className="flex h-[22px] items-center gap-[3px]">
              <CheckBox id={name} checked={on} />
              <label htmlFor={name} className={on ? 'font-bold' : ''}>{name}</label>
            </li>
          ))}
        </ul>
      </div>

      <div className="mt-2 h-1 shrink-0 border-t border-b-2 border-t-white border-b-[#9a9cb8]" />

      <div className="shrink-0 px-1.5 pt-2">
        <p className="pl-px leading-[18px] whitespace-nowrap">Vedä kenttiä alla olevien alueiden välillä:</p>
        <div className="flex gap-3">
          <Area
            label="Raporttisuod..."
            icon={<Svg w={14} h={13}><path d="M.500.500h13L8.500 6v6l-3-1.500V6z" fill="#777a80" stroke="#44474d" /><path d="M3 2h3l1 3v5" stroke="#e2e2e6" /></Svg>}
          >
            <Chip label="Toimittaja" />
          </Area>
          <Area label="Sarakeotsikot" icon={<GridIcon />}>
            <Chip label="Arvot" sigma />
          </Area>
        </div>
        <div className="mt-0.5 flex gap-3">
          <Area label="Riviotsikot" icon={<GridIcon left />}>
            <Chip label="Tuoteryhmä" />
          </Area>
          <Area label="Arvot" icon={<Sigma />}>
            <Chip label="Tuotemäärä" />
            <Chip label="Hankintahin..." />
          </Area>
        </div>
        <div className="mt-[5px] mb-2 flex h-[26px] items-center">
          <CheckBox id="defer" />
          <label htmlFor="defer" className="ml-2 flex-1 whitespace-nowrap">Siirrä asettelun päivi...</label>
          <button disabled className="h-[26px] w-[86px] rounded-xs border border-[#d0d0d2] bg-[#f4f4f4] text-[#a5a5a8]">Päivitä</button>
        </div>
      </div>
    </div>
  </aside>
);

/* ---------- status bar and task bar ---------- */

const StatusBar = () => (
  <footer className="flex h-[27px] shrink-0 items-center border-t border-[#f4f4f8] bg-[linear-gradient(#dcdfe8_0,#c3c6d2_10px,#adb1b9_11px,#c3c7ca)] text-[#2f333b]">
    <span className="w-[54px] pl-1.5">Valmis</span>
    <span className="flex h-[22px] w-[112px] items-center justify-between border-x border-[#8f9299] pr-3 pl-2 whitespace-nowrap shadow-[inset_1px_0_0_#eeeeee]">
      Num Lock
      <Svg>
        <path d="M.500 1.500h15v12H.500z" fill="#fff" stroke="#6684b8" />
        <path d="M1 2h14v2.500H1z" fill="#4c7bcb" />
        <path d="M2 7.500h12M2 10h12M5.500 5v8M10 5v8" stroke="#a5b7d6" />
        <circle cx="3" cy="3.500" r="2.800" fill="#dc4a36" />
      </Svg>
    </span>
    <div className="ml-auto flex items-center">
      <div className="flex h-6 w-[71px] overflow-hidden rounded-xs border border-[#8f9299]">
        <button aria-label="Normaali" className="flex flex-1 items-center justify-center bg-linear-to-b from-[#f7cf9c] to-[#fddc7c]"><Svg><path d="M.500 1.500h15v12H.500z" fill="#fff" stroke="#55585e" /><path d="M5.500 2v12M10.500 2v12M1 5.500h14M1 9.500h14" stroke="#55585e" /></Svg></button>
        <button aria-label="Sivun asettelu" className="flex flex-1 items-center justify-center border-x border-[#a9abb2] bg-[#d3d5da]"><Svg><path d="M1.500 1.500h13v13h-13z" fill="#a9acb2" stroke="#66696f" /><path d="M4.500 3.500h7v9h-7z" fill="#fff" stroke="#66696f" /><path d="M6 6.500h4M6 8.500h4M6 10.500h4" stroke="#66696f" /></Svg></button>
        <button aria-label="Sivunvaihdot" className="flex flex-1 items-center justify-center bg-[#d3d5da]"><Svg><path d="M.500 1.500h15v13H.500z" fill="#b4b7bc" stroke="#66696f" /><path d="M1 2h4.500v8.500H1zM7.500 2h3v8.500h-3z" fill="#fff" stroke="#66696f" /></Svg></button>
      </div>
      <button className="w-[48px] pl-1 text-xs">100%</button>
      <button aria-label="Loitonna" className="flex h-5 w-5 items-center justify-center rounded-full border-2 border-[#6c6f76] bg-linear-to-b from-white to-[#c9cbd0]"><span className="h-0.5 w-2.5 bg-[#4d5057]" /></button>
      <input
        type="range"
        aria-label="Zoomaus"
        className="h-[17px] w-[126px] appearance-none bg-[linear-gradient(#4d5057,#4d5057)] bg-[length:100%_1px] bg-center bg-no-repeat [&::-webkit-slider-thumb]:h-[15px] [&::-webkit-slider-thumb]:w-[11px] [&::-webkit-slider-thumb]:appearance-none [&::-webkit-slider-thumb]:rounded-t-xs [&::-webkit-slider-thumb]:rounded-b-full [&::-webkit-slider-thumb]:border [&::-webkit-slider-thumb]:border-[#55585e] [&::-webkit-slider-thumb]:bg-[#e9eaed]"
      />
      <button aria-label="Lähennä" className="mr-[5px] flex h-5 w-5 items-center justify-center rounded-full border-2 border-[#6c6f76] bg-linear-to-b from-white to-[#c9cbd0]">
        <Svg w={10} h={10}><path d="M0 5h10M5 0v10" stroke="#4d5057" strokeWidth="2" /></Svg>
      </button>
    </div>
  </footer>
);

const TaskBar = () => (
  <div className="relative flex h-2 shrink-0 gap-[3px] border-t border-[#44474a] bg-linear-to-b from-[#868988] to-[#5f6262] pl-[279px]">
    <span className="w-[197px] rounded-t-sm border border-b-0 border-[#2e3030] bg-linear-to-b from-[#b1b3b1] to-[#8c8f8d] pt-1 pl-2"><span className="block h-1 w-3.5 bg-[#b8c98a]" /></span>
    <span className="w-[197px] rounded-t-sm border border-b-0 border-[#2e3030] bg-linear-to-b from-[#b1b3b1] to-[#8c8f8d] pt-1 pl-3"><span className="block h-1 w-3.5 bg-white" /></span>
    <span className="w-[197px] rounded-t-sm border border-b-0 border-black bg-[#3a3e3a] pt-1 pl-3"><span className="block h-1 w-3.5 bg-[#85c063]" /></span>
    <span className="mt-1 ml-[86px] h-1 w-2.5 bg-[#d9c47a]" />
    <span className="mt-1 ml-3 h-1 w-4 bg-[#a9c3d8]" />
    <span className="mt-1 ml-2 h-1 w-3.5 rounded-t-full bg-[#4f8fc9]" />
    <button aria-label="Käynnistä" className="absolute bottom-0 left-3 h-[15px] w-12 overflow-hidden">
      <Svg w={48} h={15}>
        <circle cx="24" cy="24" r="23" fill="#6f9cba" stroke="#27465c" strokeWidth="2" />
        <ellipse cx="24" cy="9" rx="15" ry="6" fill="#b4d0e0" />
        <path d="M12 15c0-7 6-9 12-4v4z" fill="#e2622b" />
        <path d="M26 15v-3c4 2 8 1 11-1l-1 4z" fill="#7cb342" />
      </Svg>
    </button>
  </div>
);

export default function App() {
  return (
    <div className="flex h-screen flex-col overflow-hidden bg-[#d5d5de] font-['Noto_Sans',sans-serif] text-xs text-[#4b4f58]">
      <TitleBar />
      <Ribbon />
      <FormulaBar />
      <main className="flex min-h-0 flex-1">
        <div className="flex min-w-0 flex-1 flex-col">
          <Sheet />
          <SheetTabs />
        </div>
        <VScroll />
        <FieldList />
      </main>
      <StatusBar />
      <TaskBar />
    </div>
  );
}
